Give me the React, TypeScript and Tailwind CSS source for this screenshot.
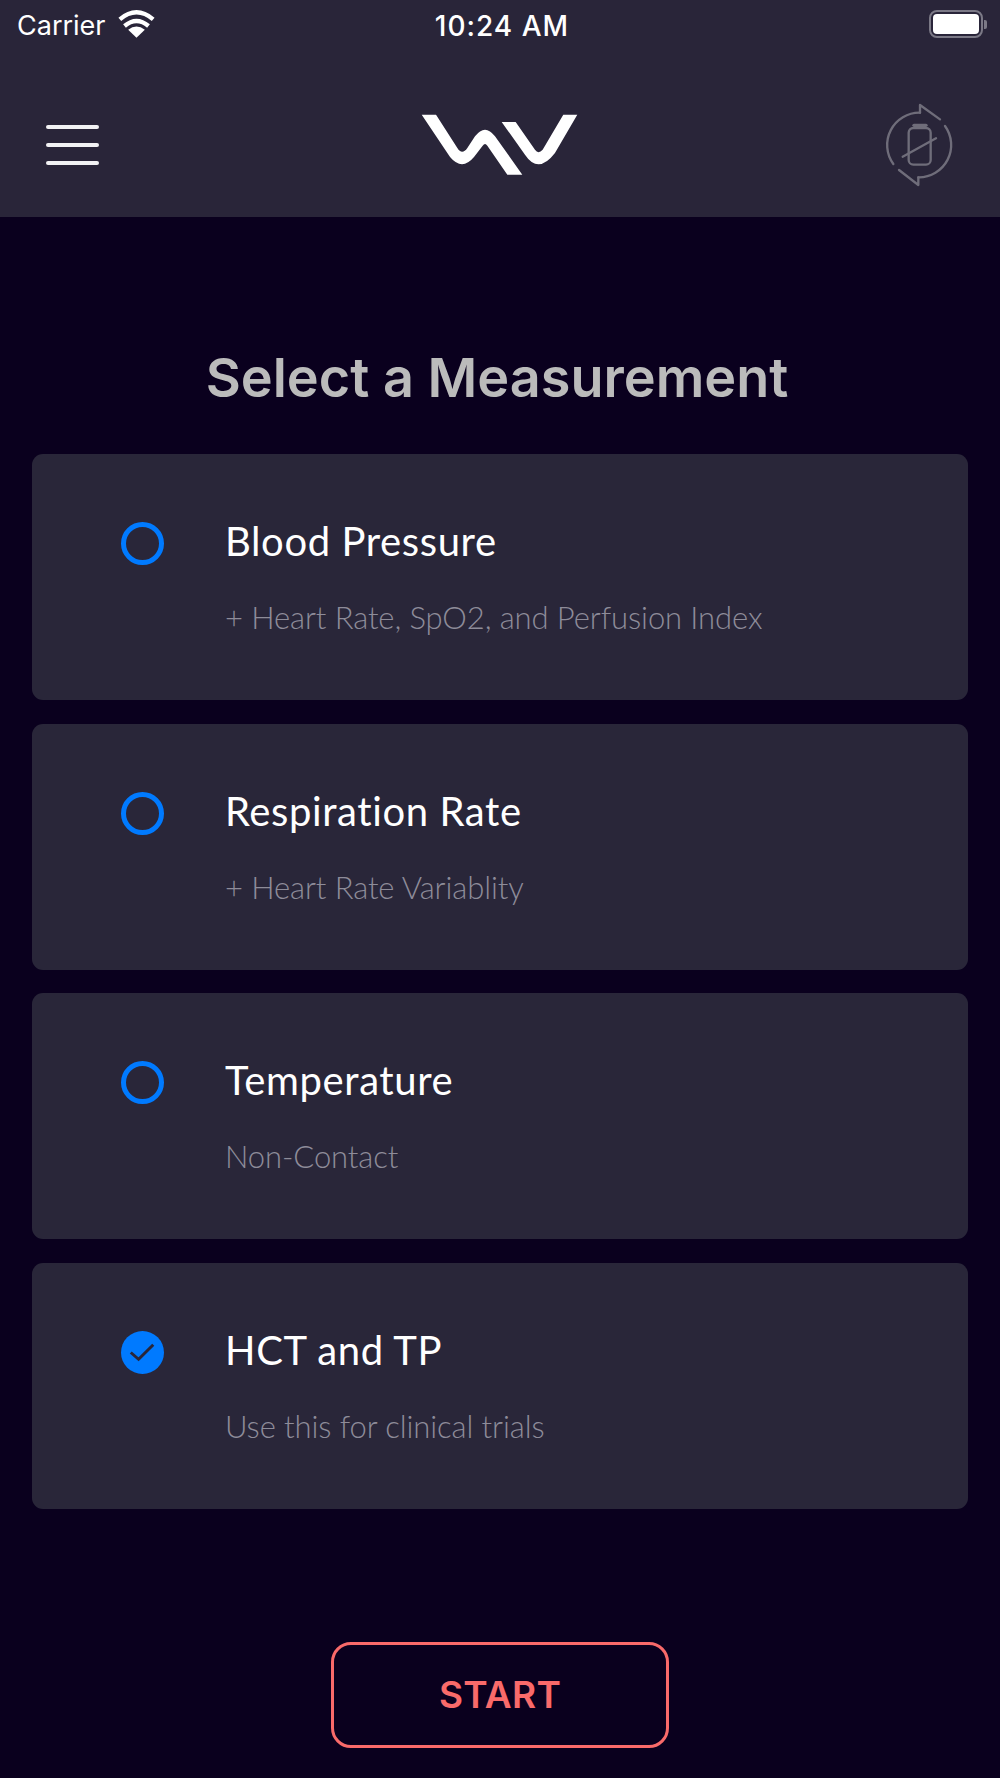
const cards = [
  { title: "Blood Pressure", sub: "+ Heart Rate, SpO2, and Perfusion Index", on: false },
  { title: "Respiration Rate", sub: "+ Heart Rate Variablity", on: false },
  { title: "Temperature", sub: "Non-Contact", on: false },
  { title: "HCT and TP", sub: "Use this for clinical trials", on: true },
];

function Wifi() {
  return (
    <svg viewBox="360 28 110 84" width="37" height="28" className="ml-[12px] mt-[-4px]">
      <path d="M415 111 L390 87 Q415 68 440 87 Z" fill="#fff" />
      <path d="M379 76 Q415 46 451 76" fill="none" stroke="#fff" strokeWidth="13" />
      <path d="M365 56 Q415 14 465 56" fill="none" stroke="#fff" strokeWidth="13" />
    </svg>
  );
}

function Battery() {
  return (
    <div className="flex items-center mt-[-4px]">
      <div className="w-[54px] h-[28px] rounded-[8px] border-[2px] border-[#7b7986] p-[2px]">
        <div className="w-full h-full rounded-[4px] bg-white" />
      </div>
      <div className="w-[3px] h-[9px] ml-[1px] rounded-r-[2px] bg-[#7b7986]" />
    </div>
  );
}

function Logo() {
  return (
    <svg viewBox="60 40 480 190" width="160" height="63.3" fill="#fff">
      <path d="M65 45 H108 L172 145 Q186 168 202 145 L225 110 Q255 70 285 110 L367 225 H322 L262 138 Q255 128 248 138 L222 172 Q186 215 150 172 Z" />
      <path d="M305 67 H347 L405 150 Q415 165 428 150 L490 45 H532 L465 160 Q415 225 375 165 Z" />
    </svg>
  );
}

function SyncBattery() {
  return (
    <svg viewBox="0 0 330 330" width="110" height="110" fill="none" stroke="#6f6d7a" strokeWidth="7" strokeLinecap="round" strokeLinejoin="round">
      <path d="M100 222 A97 97 0 0 1 180 68" />
      <path d="M180 68 L180 45 L240 88" />
      <path d="M255 108 A97 97 0 0 1 175 262" />
      <path d="M175 262 L175 285 L117 240" />
      <rect x="146" y="114" width="66" height="110" rx="14" />
      <path d="M162 106 H198" strokeWidth="10" />
      <path d="M128 200 L228 145" />
    </svg>
  );
}

export default function App() {
  return (
    <div className="min-h-[1778px] bg-[#0a001e] font-['Inter',sans-serif] overflow-hidden">
      <header className="h-[217px] bg-[#292539] text-white">
        <div className="h-[52px] grid grid-cols-3 items-center pl-[17px] pr-[13px]">
          <div className="flex items-center text-[27px] leading-[44px]">
            <span>Carrier</span>
            <Wifi />
          </div>
          <div className="text-center text-[28px] leading-[44px] font-medium tracking-[1px]">10:24 AM</div>
          <div className="flex justify-end">
            <Battery />
          </div>
        </div>
        <div className="flex items-center justify-between pl-[46px] pr-[30px] pt-[38px]">
          <div className="w-[94px] flex flex-col gap-[14px]">
            <div className="w-[53px] h-[4px] rounded-full bg-[#f2f2f4]" />
            <div className="w-[53px] h-[4px] rounded-full bg-[#f2f2f4]" />
            <div className="w-[53px] h-[4px] rounded-full bg-[#f2f2f4]" />
          </div>
          <Logo />
          <SyncBattery />
        </div>
      </header>
      <main className="pt-[129px]">
        <h1 className="text-center text-[54px] leading-[64px] font-semibold text-[#bbbbbb] pr-[6px]">Select a Measurement</h1>
        <div className="mt-[44px] px-[32px] flex flex-col gap-[23.67px]">
          {cards.map((c) => (
            <div key={c.title} className="h-[246px] rounded-[11px] bg-[#292639] pl-[89px] pt-[68px] flex items-start">
              {c.on ? (
                <div className="w-[43px] h-[43px] rounded-full bg-[#007aff] flex items-center justify-center">
                  <svg viewBox="0 0 44 44" width="43" height="43" fill="none" stroke="#292639" strokeWidth="3">
                    <path d="M10 22 L18 29 L33 14" />
                  </svg>
                </div>
              ) : (
                <div className="w-[43px] h-[43px] rounded-full border-[5px] border-[#007aff]" />
              )}
              <div className="ml-[61px] mt-[-5px] font-['Lato',sans-serif]">
                <div className="text-[40px] leading-[48px] tracking-[0.6px] text-white">{c.title}</div>
                <div className="mt-[32px] text-[31px] leading-[40px] font-light tracking-[-0.1px] text-[#8e8c99]">{c.sub}</div>
              </div>
            </div>
          ))}
        </div>
        <button className="block mx-auto mt-[133px] w-[338px] h-[106px] rounded-[20px] border-[3px] border-[#f96a6a] text-[37px] tracking-[0.3px] font-semibold text-[#f96a6a]">
          START
        </button>
      </main>
    </div>
  );
}
